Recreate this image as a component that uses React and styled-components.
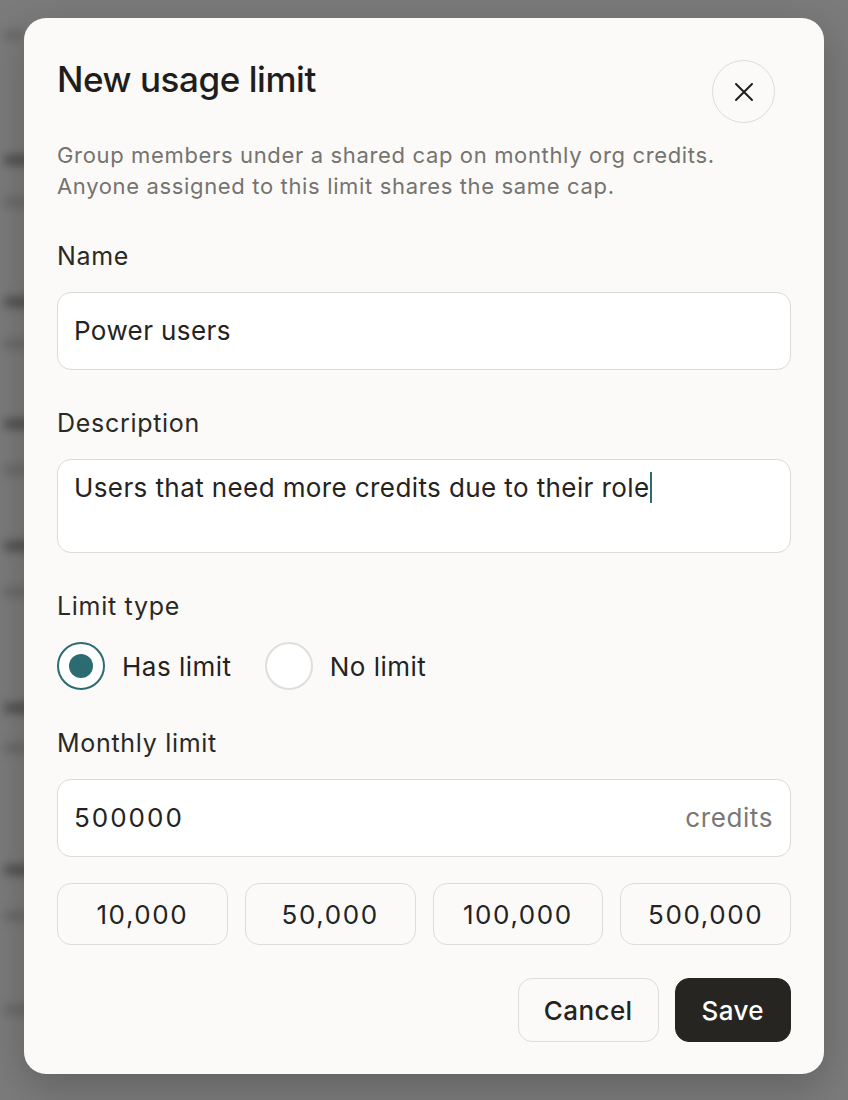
import React from 'react';
import styled, { createGlobalStyle } from 'styled-components';

const GlobalStyle = createGlobalStyle`
  html, body {
    margin: 0;
    padding: 0;
    background: #7b7b7b;
    font-family: Inter, "Noto Sans", "Liberation Sans", sans-serif;
    -webkit-font-smoothing: antialiased;
  }
  * { box-sizing: border-box; }
`;

const Screen = styled.div`
  position: relative;
  width: 848px;
  height: 1100px;
  overflow: hidden;
  background: #7b7b7b;
`;

// the page behind the dialog, blurred under the overlay
const BehindPage = styled.div`
  position: absolute;
  inset: 0;
  display: flex;
  flex-direction: column;
  padding: 30px 0 0 4px;
  filter: blur(5px);
`;
const BehindLine = styled.div`
  height: ${(p) => p.$h || 10}px;
  width: ${(p) => p.$w}px;
  margin-top: ${(p) => p.$gap}px;
  background: ${(p) => (p.$dark ? '#4e4e4e' : '#686868')};
  border-radius: 4px;
`;

const Centered = styled.div`
  position: relative;
  display: flex;
  justify-content: center;
  padding-top: 18px;
`;

const Dialog = styled.div`
  width: 800px;
  background: #fbfaf8;
  border-radius: 22px;
  padding: 39px 33px 32px;
  box-shadow: 0 12px 40px rgba(0, 0, 0, 0.22);
  display: flex;
  flex-direction: column;
`;

const Header = styled.div`
  display: flex;
  justify-content: space-between;
  align-items: flex-start;
`;

const Title = styled.h2`
  margin: 0;
  font-size: 35px;
  line-height: 44px;
  font-weight: 500;
  color: #1f1e1c;
  letter-spacing: -0.45px;
`;

const CloseButton = styled.button`
  width: 63px;
  height: 63px;
  margin: 3px 16px 0 0;
  border-radius: 50%;
  border: 1.5px solid #dedcd8;
  background: transparent;
  display: flex;
  align-items: center;
  justify-content: center;
  padding: 0;
  color: #1f1e1c;
`;

const Intro = styled.p`
  margin: 17px 0 0;
  font-size: 22px;
  line-height: 31px;
  letter-spacing: 0.65px;
  color: #75736f;
`;

const Form = styled.div`
  margin-top: 38px;
  display: flex;
  flex-direction: column;
  gap: 37px;
`;

const Field = styled.div`
  display: flex;
  flex-direction: column;
  gap: 20px;
`;

const Label = styled.div`
  font-size: 25px;
  line-height: 32px;
  letter-spacing: 0.7px;
  color: #2a2926;
`;

const InputBox = styled.div`
  display: flex;
  align-items: ${(p) => (p.$multiline ? 'flex-start' : 'center')};
  justify-content: space-between;
  height: ${(p) => (p.$multiline ? 94 : 78)}px;
  padding: ${(p) => (p.$multiline ? '12px 17px 12px 16px' : '0 17px 0 16px')};
  background: #ffffff;
  border: 1.5px solid #dcdad6;
  border-radius: 14px;
  font-size: 26px;
  line-height: 32px;
  letter-spacing: 0.4px;
  color: #24231f;
`;

const Number = styled.span`
  letter-spacing: 2px;
`;

const Caret = styled.span`
  display: inline-block;
  width: 2px;
  height: 31px;
  margin-left: 1px;
  vertical-align: -6px;
  background: #2d6b72;
`;

const Suffix = styled.span`
  color: #7a7874;
  letter-spacing: 0.6px;
`;

const RadioRow = styled.div`
  display: flex;
  align-items: center;
  gap: 33px;
`;

const RadioOption = styled.label`
  display: flex;
  align-items: center;
  gap: 17px;
  font-size: 26px;
  letter-spacing: 0.5px;
  color: #24231f;
`;

const RadioCircle = styled.span`
  width: 48px;
  height: 48px;
  border-radius: 50%;
  border: 2px solid ${(p) => (p.$checked ? '#2d6b72' : '#e0deda')};
  background: #ffffff;
  display: flex;
  align-items: center;
  justify-content: center;
  &::after {
    content: '';
    width: 24px;
    height: 24px;
    border-radius: 50%;
    background: ${(p) => (p.$checked ? '#2d6b72' : 'transparent')};
  }
`;

const Presets = styled.div`
  display: grid;
  grid-template-columns: repeat(4, 1fr);
  gap: 17px;
  margin-top: -11px;
`;

const PresetButton = styled.button`
  height: 62px;
  border: 1.5px solid #dedcd8;
  border-radius: 14px;
  background: #fbfaf8;
  font-family: inherit;
  font-size: 26px;
  letter-spacing: 1.6px;
  color: #24231f;
  padding: 0;
`;

const Footer = styled.div`
  display: flex;
  justify-content: flex-end;
  gap: 16px;
  margin-top: 33px;
`;

const ActionButton = styled.button`
  height: 64px;
  padding: 0 ${(p) => (p.$primary ? 26 : 25)}px;
  border-radius: 14px;
  border: 1.5px solid ${(p) => (p.$primary ? '#262522' : '#dedcd8')};
  background: ${(p) => (p.$primary ? '#262522' : '#fbfaf8')};
  color: ${(p) => (p.$primary ? '#ffffff' : '#24231f')};
  font-family: inherit;
  font-size: 26px;
  font-weight: 500;
  letter-spacing: 0.4px;
`;

const behindLines = [
  { gap: 0, w: 20, dark: false },
  { gap: 115, w: 30, dark: true },
  { gap: 32, w: 24, dark: false },
  { gap: 90, w: 30, dark: true },
  { gap: 32, w: 24, dark: false },
  { gap: 70, w: 30, dark: true },
  { gap: 36, w: 24, dark: false },
  { gap: 66, w: 30, dark: true },
  { gap: 36, w: 24, dark: false },
  { gap: 106, w: 30, dark: true },
  { gap: 30, w: 24, dark: false },
  { gap: 112, w: 30, dark: true },
  { gap: 36, w: 24, dark: false },
  { gap: 84, w: 140, dark: false },
];

const presets = ['10,000', '50,000', '100,000', '500,000'];

export default function App() {
  return (
    <>
      <GlobalStyle />
      <Screen>
        <BehindPage>
          {behindLines.map((l, i) => (
            <BehindLine key={i} $gap={l.gap} $w={l.w} $dark={l.dark} />
          ))}
        </BehindPage>
        <Centered>
          <Dialog>
            <Header>
              <Title>New usage limit</Title>
              <CloseButton aria-label="Close">
                <svg width="24" height="24" viewBox="0 0 24 24" fill="none" stroke="currentColor" strokeWidth="2" strokeLinecap="round">
                  <path d="M4 4l16 16M20 4L4 20" />
                </svg>
              </CloseButton>
            </Header>
            <Intro>
              Group members under a shared cap on monthly org credits.
              <br />
              Anyone assigned to this limit shares the same cap.
            </Intro>
            <Form>
              <Field>
                <Label>Name</Label>
                <InputBox>Power users</InputBox>
              </Field>
              <Field>
                <Label>Description</Label>
                <InputBox $multiline>
                  <span>
                    Users that need more credits due to their role
                    <Caret />
                  </span>
                </InputBox>
              </Field>
              <Field>
                <Label>Limit type</Label>
                <RadioRow>
                  <RadioOption>
                    <RadioCircle $checked />
                    Has limit
                  </RadioOption>
                  <RadioOption>
                    <RadioCircle />
                    No limit
                  </RadioOption>
                </RadioRow>
              </Field>
              <Field>
                <Label>Monthly limit</Label>
                <InputBox>
                  <Number>500000</Number>
                  <Suffix>credits</Suffix>
                </InputBox>
              </Field>
              <Presets>
                {presets.map((p) => (
                  <PresetButton key={p}>{p}</PresetButton>
                ))}
              </Presets>
            </Form>
            <Footer>
              <ActionButton>Cancel</ActionButton>
              <ActionButton $primary>Save</ActionButton>
            </Footer>
          </Dialog>
        </Centered>
      </Screen>
    </>
  );
}
